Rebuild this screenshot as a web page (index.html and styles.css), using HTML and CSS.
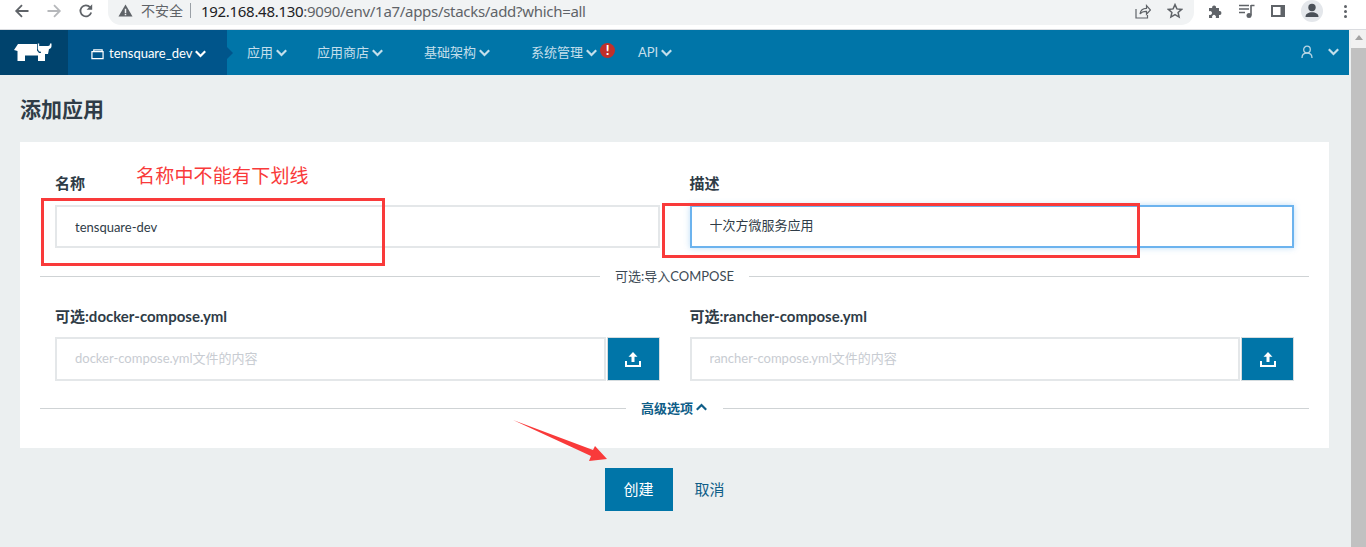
FILE: index.html
```html
<!DOCTYPE html>
<html lang="zh-CN">
<head>
<meta charset="utf-8">
<title>添加应用</title>
<link rel="stylesheet" href="styles.css">
</head>
<body>
<div class="browser-bar">
  <div class="browser-nav">
    <svg class="bi" viewBox="0 0 16 16"><path d="M14.5 8H2.5M8 2.2 2.2 8 8 13.8" fill="none" stroke="#5f6368" stroke-width="1.8"/></svg>
    <svg class="bi" viewBox="0 0 16 16"><path d="M1.5 8h12M8 2.2 13.8 8 8 13.8" fill="none" stroke="#b6b8bb" stroke-width="1.8"/></svg>
    <svg class="bi" viewBox="0 0 16 16"><path d="M13.2 9.5A5.5 5.5 0 1 1 12 4.2" fill="none" stroke="#5f6368" stroke-width="1.8"/><path d="M14.2 1.2v5.6H8.6z" fill="#5f6368"/></svg>
  </div>
  <div class="address">
    <svg class="warn" viewBox="0 0 16 16"><path d="M8 1.5 15.5 14.5H.5z" fill="#5f6368"/><path d="M7.2 6h1.6v4.6H7.2zM7.2 11.4h1.6V13H7.2z" fill="#f1f3f4"/></svg>
    <span class="insecure">不安全</span>
    <span class="url"><b class="host">192.168.48.130</b>:9090/env/1a7/apps/stacks/add?which=all</span>
    <svg class="ai share" viewBox="0 0 16 16"><path d="M1 6v9h11.5v-3M5 11c.5-3.5 3-5.6 6.5-5.6V2.5L15.5 7l-4 4.2V8.3C8.700 8.200 6.500 9 5 11z" fill="none" stroke="#5f6368" stroke-width="1.200"/></svg>
    <svg class="ai star" viewBox="0 0 16 16"><path d="m8 1.600 1.900 4.300 4.700.5-3.500 3.100 1 4.600L8 11.700l-4.100 2.400 1-4.600L1.400 6.400l4.700-.5z" fill="none" stroke="#5f6368" stroke-width="1.500"/></svg>
  </div>
  <div class="browser-tools">
    <svg class="bi" viewBox="0 0 16 16"><path d="M1 5h3.200a2 2 0 1 1 3.800 0H11v3a2 2 0 1 1 0 3.900V15H7.700a2 2 0 1 0-3.400 0H1v-3.300a2 2 0 1 0 0-3.400z" fill="#5f6368"/></svg>
    <svg class="bi" viewBox="0 0 16 16"><path d="M0 2.500h10M0 6h10M0 9.500h6" stroke="#5f6368" stroke-width="1.500"/><path d="M12 2.500h3.500M12 2v10.500" fill="none" stroke="#5f6368" stroke-width="1.600"/><circle cx="10" cy="12.500" r="2.500" fill="#5f6368"/></svg>
    <svg class="bi" viewBox="0 0 16 16"><path fill-rule="evenodd" d="M1 2h14v12H1zM3 4v8h7.500V4z" fill="#5f6368"/></svg>
    <span class="avatar"><svg viewBox="0 0 22 22"><circle cx="11" cy="7.500" r="3.700" fill="#4a5058"/><path d="M4.500 17c0-3.200 3-4.700 6.500-4.700s6.500 1.500 6.500 4.700z" fill="#4a5058"/></svg></span>
    <span class="dots"><i></i><i></i><i></i></span>
  </div>
</div>

<div class="shell">
  <div class="page">
    <header class="topnav">
      <div class="logo">
        <svg viewBox="0 0 40 19"><path d="M4 1H23V7.500L25 10H31V18H24V12.500H11V18H3.500V8L0 7z" fill="#fff"/><path d="M23.800 .5h1.400V3H34c1.500 0 2-.8 2-2.500h1.500V3c0 1.800-1 2.800-2.500 3l-1 5H27.500L26.500 8.500H25L23.800 6z" fill="#fff"/></svg>
      </div>
      <div class="env">
        <svg class="folder" viewBox="0 0 14 12"><path d="M1 3.500h12V11H1zM3 3.500V1.500h9V3.500" fill="none" stroke="#fff" stroke-width="1.300"/></svg>
        <span>tensquare_dev</span>
        <svg class="chev envchev" viewBox="0 0 12 8"><path d="M1.300 1.300 6 6l4.700-4.700" /></svg>
      </div>
      <nav class="menu">
        <a class="item i-short">应用<svg class="chev" viewBox="0 0 12 8"><path d="M1.300 1.300 6 6l4.700-4.700"/></svg></a>
        <a class="item i-wide">应用商店<svg class="chev" viewBox="0 0 12 8"><path d="M1.300 1.300 6 6l4.700-4.700"/></svg></a>
        <a class="item i-wide">基础架构<svg class="chev" viewBox="0 0 12 8"><path d="M1.300 1.300 6 6l4.700-4.700"/></svg></a>
        <a class="item i-wide">系统管理<svg class="chev" viewBox="0 0 12 8"><path d="M1.300 1.300 6 6l4.700-4.700"/></svg><span class="alert">!</span></a>
        <a class="item i-api">API<svg class="chev" viewBox="0 0 12 8"><path d="M1.300 1.300 6 6l4.700-4.700"/></svg></a>
      </nav>
      <div class="user">
        <svg class="usericon" viewBox="0 0 12 14"><circle cx="6" cy="4.500" r="3.300" fill="none" stroke="#b9d6e4" stroke-width="1.300"/><path d="M1 13c0-3 2-4.800 5-4.800s5 1.800 5 4.800" fill="none" stroke="#b9d6e4" stroke-width="1.300"/></svg>
        <svg class="chev" viewBox="0 0 12 8"><path d="M1.300 1.300 6 6l4.700-4.700"/></svg>
      </div>
    </header>

    <main class="content">
      <h1 class="title">添加应用</h1>
      <form class="card">
        <div class="row">
          <div class="field">
            <label class="label">名称</label>
            <input class="input" type="text" value="tensquare-dev">
          </div>
          <div class="field">
            <label class="label">描述</label>
            <input class="input focused" type="text" value="十次方微服务应用">
          </div>
        </div>
        <div class="divider"><span>可选:导入COMPOSE</span></div>
        <div class="row row-files">
          <div class="field">
            <label class="label">可选:docker-compose.yml</label>
            <div class="file-group">
              <input class="input tall" type="text" placeholder="docker-compose.yml文件的内容">
              <button class="upload" type="button"><svg viewBox="0 0 16 16"><path d="M8 1 3.500 5.800h3V11h3V5.800h3z" fill="#fff"/><path d="M1 10v5h14v-5" fill="none" stroke="#fff" stroke-width="2"/></svg></button>
            </div>
          </div>
          <div class="field">
            <label class="label">可选:rancher-compose.yml</label>
            <div class="file-group">
              <input class="input tall" type="text" placeholder="rancher-compose.yml文件的内容">
              <button class="upload" type="button"><svg viewBox="0 0 16 16"><path d="M8 1 3.500 5.800h3V11h3V5.800h3z" fill="#fff"/><path d="M1 10v5h14v-5" fill="none" stroke="#fff" stroke-width="2"/></svg></button>
            </div>
          </div>
        </div>
        <div class="divider advanced"><span>高级选项<svg class="chev up" viewBox="0 0 12 8"><path d="M1.300 6.700 6 2l4.700 4.700"/></svg></span></div>
      </form>
      <div class="actions">
        <button class="btn-primary" type="button">创建</button>
        <button class="btn-link" type="button">取消</button>
      </div>
    </main>
  </div>
  <div class="scrollbar"><span class="sb-arrow"></span><span class="sb-thumb"></span></div>
</div>

<div class="mark box-one"></div>
<div class="mark box-two"></div>
<div class="note">名称中不能有下划线</div>
<svg class="arrow" viewBox="0 0 100 46"><path d="M0 1 80 31 82 27 94 40 76 42 78 37z" fill="#f93a3a"/></svg>
</body>
</html>
```
FILE: styles.css
```css
* { box-sizing: border-box; }
html, body { margin: 0; height: 547px; overflow: hidden; }
body {
  position: relative;
  background: #fff;
  font-family: Lato, "Noto Sans CJK SC", sans-serif;
  font-size: 13px;
  color: #2f3c47;
}

/* browser chrome */
.browser-bar {
  height: 30px;
  display: flex;
  background: #fff;
  border-bottom: 1px solid #dadce0;
}
.browser-nav { width: 108px; display: flex; align-items: flex-start; gap: 16px; padding: 3px 0 0 14px; }
.bi { width: 16px; height: 16px; display: block; flex: none; }
.address {
  width: 1086px;
  height: 25px;
  background: #f1f3f4;
  border-radius: 0 0 13px 13px;
  display: flex;
  align-items: center;
  padding: 0 11px 4px 10px;
  white-space: nowrap;
}
.warn { width: 15px; height: 15px; flex: none; }
.insecure { margin-left: 8px; padding-right: 7px; border-right: 1px solid #9aa0a6; color: #5f6368; line-height: 15px; font-size: 14px; }
.url { margin-left: 10px; font-family: "Noto Sans", sans-serif; font-size: 15px; color: #5f6368; letter-spacing: -.3px; flex: 1; }
.host { font-weight: 400; color: #202124; }
.ai { width: 16px; height: 16px; flex: none; }
.share { margin-right: 16px; }
.browser-tools { display: flex; align-items: flex-start; padding: 3px 0 0 14px; gap: 15px; flex: 1; }
.avatar { width: 22px; height: 22px; margin-top: -3px; border-radius: 50%; background: #e4e7eb; display: block; }
.avatar svg { display: block; width: 22px; height: 22px; }
.dots { display: flex; flex-direction: column; gap: 2px; margin: 2px 0 0 6px; }
.dots i { width: 3px; height: 3px; border-radius: 50%; background: #5f6368; display: block; }

/* layout */
.shell { display: flex; height: 517px; }
.page { flex: 1; background: #ebeff0; min-width: 0; }
.scrollbar { width: 15px; background: #f1f1f1; display: flex; flex-direction: column; align-items: center; }
.sb-arrow { border: 4px solid transparent; border-bottom: 5px solid #a3a3a3; border-top: 0; margin: 5px 0 8px; }
.sb-thumb { width: 100%; flex: 1; background: #c1c1c1; }

/* app nav */
.topnav { height: 45px; margin-right: 2px; background: #0075a8; display: flex; }
.logo { width: 68px; background: #00436d; display: flex; align-items: center; justify-content: center; padding-bottom: 1px; }
.logo svg { width: 40px; height: 19px; display: block; }
.env {
  position: relative;
  width: 159px;
  background: #00558b;
  color: #fff;
  display: flex;
  align-items: center;
  padding: 1px 0 0 23px;
}
.env::after {
  content: "";
  position: absolute;
  left: 100%;
  top: 17px;
  border-left: 6px solid #00558b;
  border-top: 6px solid transparent;
  border-bottom: 6px solid transparent;
}
.env .chev { margin-top: 2px; }
.folder { width: 13px; height: 12px; margin-right: 5px; margin-top: 2px; }
.chev { width: 13px; height: 8px; flex: none; fill: none; stroke: #c4dfeb; stroke-width: 2.200; margin-left: 2px; }
.item .chev { margin-top: 3px; }
.envchev { stroke: #fff; }
.menu { display: flex; padding-left: 20px; color: #c4dfeb; }
.item { display: flex; align-items: center; padding-bottom: 3px; white-space: nowrap; }
.i-short { width: 70px; }
.i-wide { width: 107px; }
.i-api { padding-bottom: 1px; }
.i-api .chev { margin-top: 1px; }
.alert {
  width: 15px;
  height: 15px;
  margin: -2px 0 0 2px;
  border-radius: 50%;
  background: #c0302a;
  color: #fff;
  font-weight: 900;
  font-size: 13px;
  line-height: 15px;
  text-align: center;
}
.user { margin-left: auto; display: flex; align-items: center; gap: 12px; padding-right: 9px; padding-bottom: 1px; }
.usericon { width: 12px; height: 14px; }

/* form */
.content { padding: 19px 20px 0; }
.title { margin: 0 0 18px; font-size: 21px; line-height: 30px; font-weight: 700; color: #2f3c47; }
.card { width: 1309px; background: #fff; padding: 31px 20px 30px; }
.row { display: grid; grid-template-columns: 1fr 1fr; gap: 30px; padding: 0 15px; }
.row .label { margin-bottom: 12px; }
.row-files { margin-top: 20px; }
.row-files .label { margin-bottom: 11px; }
.label { display: block; height: 20px; line-height: 20px; font-size: 15px; font-weight: 700; color: #2f3c47; }
.input {
  width: 100%;
  height: 43px;
  display: block;
  padding: 0 18px;
  border: 2px solid #e4e7e9;
  background: #fff;
  font: 13px Lato, "Noto Sans CJK SC", sans-serif;
  color: #2f3c47;
  outline: 0;
}
.input::placeholder { color: #c8ccd2; opacity: 1; }
.focused { border-color: #6cb3ee; box-shadow: 0 0 6px rgba(108, 179, 238, .45); padding-bottom: 4px; }
.tall { height: 44px; padding-bottom: 3px; }
.file-group { display: flex; gap: 1px; }
.upload {
  flex: none;
  width: 53px;
  height: 44px;
  padding: 0;
  background: #0075a8;
  border: 1px solid #d5dcdf;
  display: flex;
  align-items: center;
  justify-content: center;
}
.upload svg { width: 16px; height: 16px; }
.divider { display: flex; align-items: center; gap: 15px; height: 20px; margin-top: 18px; font-size: 13px; color: #3d4a55; white-space: nowrap; }
.divider span { position: relative; top: -1px; }
.divider::before, .divider::after { content: ""; flex: 1; height: 1px; background: #cfd3d5; }
.advanced { margin-top: 17px; font-weight: 700; color: #0f5e88; }
.advanced span { display: flex; align-items: center; }
.up { stroke: #0f5e88; margin-left: 2px; }
.actions { margin-top: 20px; display: flex; justify-content: center; }
.btn-primary {
  width: 68px;
  height: 43px;
  padding: 0 0 3px;
  border: 0;
  background: #0075a8;
  color: #fff;
  font: 15px Lato, "Noto Sans CJK SC", sans-serif;
}
.btn-link {
  width: 74px;
  height: 43px;
  padding: 0 0 3px;
  border: 0;
  background: none;
  color: #0f5e88;
  font: 15px Lato, "Noto Sans CJK SC", sans-serif;
}

/* red screenshot annotations, laid over the page */
.mark { position: absolute; border: 3px solid #f93a3a; }
.box-one { left: 41px; top: 198px; width: 344px; height: 68px; }
.box-two { left: 662px; top: 203px; width: 478px; height: 55px; }
.note { position: absolute; left: 136px; top: 162px; font-size: 19px; letter-spacing: .2px; line-height: 28px; color: #f93a3a; white-space: nowrap; }
.arrow { position: absolute; left: 513px; top: 419px; width: 100px; height: 46px; }
```
